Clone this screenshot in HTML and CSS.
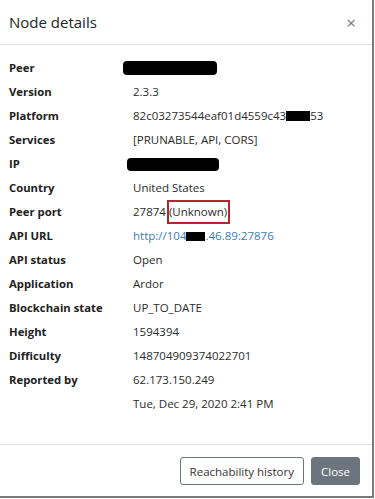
FILE: index.html
```html
<!DOCTYPE html>
<html lang="en">
<head>
  <meta charset="UTF-8" />
  <meta name="viewport" content="width=device-width, initial-scale=1.0" />
  <title>Node details</title>
  <link rel="stylesheet" href="styles.css">
</head>
<body>
  <div class="modal">
    <div class="modal__header">
      <h2 class="modal__title">Node details</h2>
      <span class="modal__close">&times;</span>
    </div>

    <div class="modal__body">
      <div class="details">
        <div class="details__label">Peer</div>
        <div class="details__value"><span class="redact redact--peer"></span></div>

        <div class="details__label">Version</div>
        <div class="details__value">2.3.3</div>

        <div class="details__label">Platform</div>
        <div class="details__value">82c03273544eaf01d4559c43<span class="redact redact--hash"></span>53</div>

        <div class="details__label">Services</div>
        <div class="details__value">[PRUNABLE, API, CORS]</div>

        <div class="details__label">IP</div>
        <div class="details__value"><span class="redact redact--ip"></span></div>

        <div class="details__label">Country</div>
        <div class="details__value">United States</div>

        <div class="details__label">Peer port</div>
        <div class="details__value">27874<span class="highlight">(Unknown)</span></div>

        <div class="details__label">API URL</div>
        <div class="details__value"><a href="#" class="details__link">http://104<span class="redact redact--url"></span>.46.89:27876</a></div>

        <div class="details__label">API status</div>
        <div class="details__value">Open</div>

        <div class="details__label">Application</div>
        <div class="details__value">Ardor</div>

        <div class="details__label">Blockchain state</div>
        <div class="details__value">UP_TO_DATE</div>

        <div class="details__label">Height</div>
        <div class="details__value">1594394</div>

        <div class="details__label">Difficulty</div>
        <div class="details__value">148704909374022701</div>

        <div class="details__label">Reported by</div>
        <div class="details__value">62.173.150.249</div>

        <div class="details__label"></div>
        <div class="details__value">Tue, Dec 29, 2020 2:41 PM</div>
      </div>
    </div>

    <div class="modal__footer">
      <button type="button" class="btn btn--outline">Reachability history</button>
      <button type="button" class="btn btn--secondary">Close</button>
    </div>
  </div>
</body>
</html>
```

FILE: styles.css
```css
body {
  margin: 0;
  font-family: 'Open Sans', 'Noto Sans', sans-serif;
  background-color: #fff;
  color: #212529;
}

.modal {
  width: 372px;
  height: 496px;
  border-right: 2px solid #7a7a7a;
  border-bottom: 2px solid #7a7a7a;
  background-color: #fff;
  display: flex;
  flex-direction: column;
}

.modal__header {
  height: 44px;
  display: flex;
  align-items: center;
  justify-content: space-between;
  padding: 0 16px 0 9px;
  border-bottom: 1px solid #dee2e6;
}

.modal__title {
  margin: 0;
  font-size: 15px;
  font-weight: 400;
}

.modal__close {
  font-size: 17px;
  color: #777;
  line-height: 1;
}

.modal__body {
  flex: 1;
  padding: 10px 9px 0 9px;
}

.details {
  display: grid;
  grid-template-columns: 124px 1fr;
  grid-auto-rows: 24px;
  align-items: center;
  font-size: 11.5px;
  color: #2b2b2b;
}

.details__label {
  font-weight: 700;
  font-size: 11.3px;
  color: #212121;
}

.details__link {
  color: #3a7bb8;
  text-decoration: none;
}

.highlight {
  border: 2px solid #b3262d;
  padding: 2px 1px 3px 0;
  margin-left: 1px;
}

.redact {
  display: inline-block;
  background-color: #000;
  vertical-align: middle;
}

.redact--peer {
  width: 94px;
  height: 14px;
  margin-left: -10px;
  border-radius: 4px;
}

.redact--ip {
  width: 92px;
  height: 13px;
  margin-left: -6px;
  border-radius: 4px;
}

.redact--hash {
  width: 24px;
  height: 10px;
}

.redact--url {
  width: 19px;
  height: 9px;
}

.modal__footer {
  border-top: 1px solid #dee2e6;
  display: flex;
  justify-content: flex-end;
  gap: 7px;
  padding: 12px 12px 11px;
}

.btn {
  font-family: inherit;
  font-size: 11.5px;
  height: 28px;
  padding: 0 9px;
  border-radius: 3px;
  cursor: pointer;
}

.btn--outline {
  background-color: #fff;
  border: 1px solid #6c757d;
  color: #333;
}

.btn--secondary {
  background-color: #6c757d;
  border: 1px solid #6c757d;
  color: #fff;
}
```
